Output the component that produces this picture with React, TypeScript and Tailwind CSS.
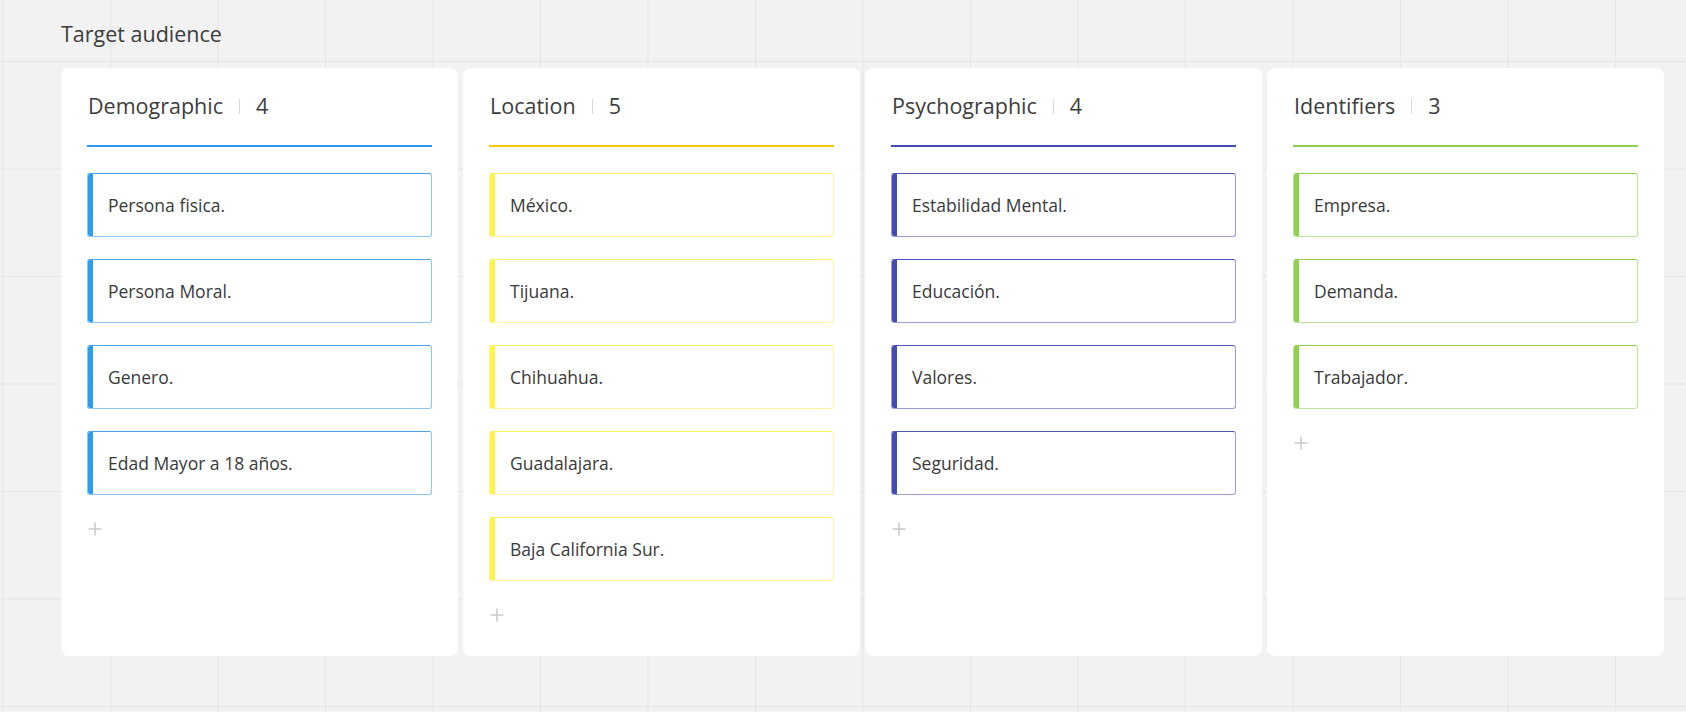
const columns = [
  {
    title: "Demographic",
    line: "bg-[#2d9bf0]",
    bar: "bg-[#2d9bf0]",
    border: "border-[#8ac6f6] border-t-[#4aa3ee]",
    items: ["Persona fisica.", "Persona Moral.", "Genero.", "Edad Mayor a 18 años."],
  },
  {
    title: "Location",
    line: "bg-[#fac710]",
    bar: "bg-[#fef445]",
    border: "border-[#fff59d] border-t-[#fef25a]",
    items: ["México.", "Tijuana.", "Chihuahua.", "Guadalajara.", "Baja California Sur."],
  },
  {
    title: "Psychographic",
    line: "bg-[#414bb2]",
    bar: "bg-[#414bb2]",
    border: "border-[#999dd8] border-t-[#5058b8]",
    items: ["Estabilidad Mental.", "Educación.", "Valores.", "Seguridad."],
  },
  {
    title: "Identifiers",
    line: "bg-[#8fd14f]",
    bar: "bg-[#8fd14f]",
    border: "border-[#bde5a0] border-t-[#8fd14f]",
    items: ["Empresa.", "Demanda.", "Trabajador."],
  },
];

function PlusIcon() {
  return (
    <svg width="14" height="14" viewBox="0 0 14 14" fill="none">
      <path d="M7 0.5V13.5M0.5 7H13.5" stroke="#c9c9c9" strokeWidth="1.5" />
    </svg>
  );
}

export default function App() {
  return (
    <div
      className="w-[1686px] h-[712px] overflow-hidden bg-[#f2f2f2] bg-[image:linear-gradient(to_right,#e5e5e5_1px,transparent_1px),linear-gradient(to_bottom,#e5e5e5_1px,transparent_1px)] bg-[size:107.5px_107.5px] bg-[position:2.5px_61px] pl-[61px] pt-[19px] text-[#3a3a3a]"
      style={{ fontFamily: '"Open Sans", "Noto Sans", sans-serif' }}
    >
      <h1 className="text-[21.5px] leading-[30px] font-normal text-[#3d3d3d]">Target audience</h1>
      <div className="flex gap-[5px] mt-[19px]">
        {columns.map((col) => (
          <div key={col.title} className="w-[397px] h-[588px] bg-white rounded-[8px] px-[26px] pt-[23px]">
            <div className="flex items-center text-[21.5px] leading-[30px] text-[#3d3d3d] pl-px">
              <span>{col.title}</span>
              <span className="mx-[16px] w-px h-[15px] bg-[#d9d9d9]" />
              <span>{col.items.length}</span>
            </div>
            <div className={`h-[2px] mt-[24px] ${col.line}`} />
            <div className="flex flex-col gap-[22px] mt-[26px]">
              {col.items.map((item) => (
                <div
                  key={item}
                  className={`flex h-[64px] rounded-[3px] border bg-white overflow-hidden ${col.border}`}
                >
                  <div className={`w-[6px] shrink-0 -my-px -ml-px ${col.bar}`} />
                  <div className="flex items-center pl-[15px] text-[17.5px] text-[#3a3a3a]">{item}</div>
                </div>
              ))}
            </div>
            <div className="mt-[27px] ml-px">
              <PlusIcon />
            </div>
          </div>
        ))}
      </div>
    </div>
  );
}
